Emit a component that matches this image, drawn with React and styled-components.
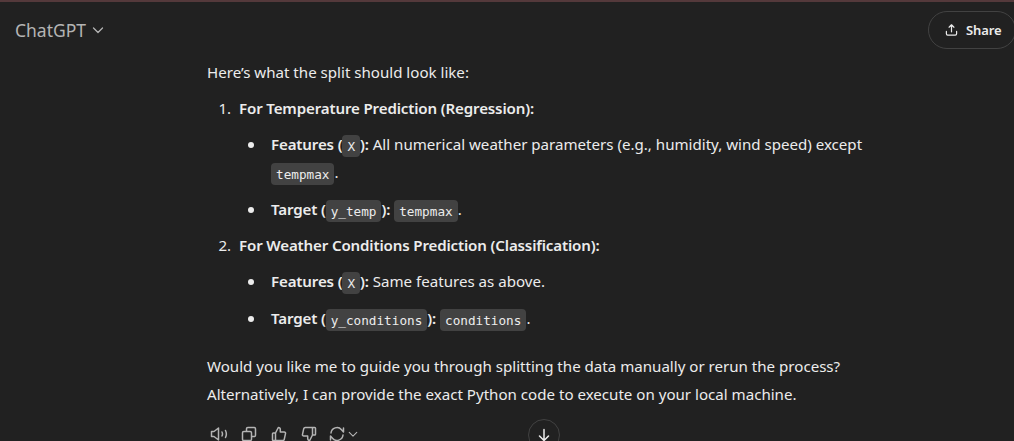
import styled, { createGlobalStyle } from "styled-components";

const GlobalStyle = createGlobalStyle`
  html, body {
    margin: 0;
    height: 100%;
    overflow: hidden;
    background: #212121;
  }
`;

const Page = styled.div`
  position: relative;
  height: 441px;
  overflow: hidden;
  background: #212121;
  color: #ececec;
  font-family: "Noto Sans", "Open Sans", sans-serif;
  font-size: 15.1px;
  line-height: 28px;
`;

const TopStrip = styled.div`
  height: 2px;
  background: #54393b;
`;

const Header = styled.header`
  display: flex;
  align-items: center;
  justify-content: space-between;
  height: 56px;
  padding-left: 15px;
`;

const ModelButton = styled.div`
  display: flex;
  align-items: center;
  gap: 6px;
  font-size: 17.5px;
  color: #b4b4b4;
`;

const ShareButton = styled.div`
  display: flex;
  align-items: center;
  gap: 8px;
  box-sizing: border-box;
  width: 88px;
  height: 38px;
  margin-right: -2px;
  padding-left: 16px;
  border: 1px solid #424242;
  border-radius: 19px;
  font-size: 13px;
  font-weight: 600;
  letter-spacing: -0.1px;
  color: #ececec;
`;

const Article = styled.main`
  width: 660px;
  margin-left: 207px;

  strong {
    font-weight: 600;
    letter-spacing: -0.15px;
  }
`;

const Para = styled.p`
  margin: 0;
`;

const Closing = styled(Para)`
  margin-top: 20px;
`;

const Numbered = styled.ol`
  margin: 8px 0 0;
  padding: 0 0 0 32px;

  > li {
    margin-top: 8px;
  }
  > li:first-child {
    margin-top: 0;
  }
  > li::marker {
    content: counter(list-item) ".\\00a0\\00a0";
  }
`;

const Bullets = styled.ul`
  margin: 8px 0 0;
  padding: 0 0 0 32px;
  list-style: none;

  > li {
    position: relative;
    margin-top: 9px;
  }
  > li:first-child {
    margin-top: 0;
  }
  > li::before {
    content: "";
    position: absolute;
    left: -23px;
    top: 12px;
    width: 6px;
    height: 6px;
    border-radius: 50%;
    background: #ececec;
  }
`;

const Code = styled.code`
  padding: 3.5px 5px;
  border-radius: 4px;
  background: #424242;
  color: #ececec;
  font-family: "DejaVu Sans Mono", "Liberation Mono", monospace;
  font-size: 12.7px;
  font-weight: 400;
  letter-spacing: 0;
  line-height: 1;
`;

const Actions = styled.div`
  display: flex;
  align-items: center;
  gap: 12px;
  margin: 17px 0 0 3px;
  color: #b4b4b4;
`;

const ActionIcon = styled.svg`
  width: 18px;
  height: 18px;
  flex: none;
  fill: none;
  stroke: currentColor;
  stroke-width: 1.5;
  stroke-linecap: round;
  stroke-linejoin: round;
`;

const RegenGroup = styled.div`
  display: flex;
  align-items: center;
  gap: 2px;
  margin-left: -2px;
`;

const ScrollButton = styled.div`
  position: absolute;
  left: 528px;
  top: 419px;
  width: 30px;
  height: 30px;
  display: flex;
  align-items: center;
  justify-content: center;
  border: 1px solid #424242;
  border-radius: 50%;
  background: #212121;
  color: #ececec;
`;

const Chevron = ({ size = 12 }) => (
  <svg width={size} height={size} viewBox="0 0 12 12" fill="none" stroke="currentColor" strokeWidth="1.3" strokeLinecap="round" strokeLinejoin="round">
    <path d="M1.5 4l4.5 4.5L10.5 4" />
  </svg>
);

const ShareIcon = () => (
  <svg width="13" height="14" viewBox="0 0 14 14" fill="none" stroke="currentColor" strokeWidth="1.3" strokeLinecap="round" strokeLinejoin="round">
    <path d="M7 9V1.6M4.4 4L7 1.4 9.6 4M1.5 8.5v2.6c0 .8.6 1.4 1.4 1.4h8.2c.8 0 1.4-.6 1.4-1.4V8.5" />
  </svg>
);

export default function App() {
  return (
    <Page>
      <GlobalStyle />
      <TopStrip />
      <Header>
        <ModelButton>
          ChatGPT
          <Chevron />
        </ModelButton>
        <ShareButton>
          <ShareIcon />
          Share
        </ShareButton>
      </Header>
      <Article>
        <Para>Here’s what the split should look like:</Para>
        <Numbered>
          <li>
            <strong>For Temperature Prediction (Regression):</strong>
            <Bullets>
              <li>
                <strong>Features (<Code>X</Code>):</strong> All numerical weather parameters (e.g., humidity, wind speed) except <Code>tempmax</Code>.
              </li>
              <li>
                <strong>Target (<Code>y_temp</Code>):</strong> <Code>tempmax</Code>.
              </li>
            </Bullets>
          </li>
          <li>
            <strong>For Weather Conditions Prediction (Classification):</strong>
            <Bullets>
              <li>
                <strong>Features (<Code>X</Code>):</strong> Same features as above.
              </li>
              <li>
                <strong>Target (<Code>y_conditions</Code>):</strong> <Code>conditions</Code>.
              </li>
            </Bullets>
          </li>
        </Numbered>
        <Closing>
          Would you like me to guide you through splitting the data manually or rerun the process? Alternatively, I can provide the exact Python code to execute on your local machine.
        </Closing>
        <Actions>
          <ActionIcon viewBox="0 0 18 18">
            <path d="M1.5 6.5H4L8.500 3v12L4 11.500H1.500zM12 7c.6 1.200.6 2.800 0 4M15.500 5.500c1.100 2.200 1.100 4.800 0 7" />
          </ActionIcon>
          <ActionIcon viewBox="0 0 18 18">
            <path d="M6.500 6V3.800c0-.7.600-1.300 1.300-1.300h6.400c.7 0 1.300.6 1.300 1.300v6.400c0 .7-.6 1.300-1.300 1.300H12M3.800 6.500h6.400c.7 0 1.300.6 1.300 1.300v6.400c0 .7-.6 1.300-1.300 1.300H3.800c-.7 0-1.300-.6-1.300-1.300V7.800c0-.7.600-1.300 1.300-1.300z" />
          </ActionIcon>
          <ActionIcon viewBox="0 0 18 18">
            <path d="M5.500 8l2.800-5.500c1.200 0 2 .9 2 2V7h3.900c.9 0 1.500.8 1.300 1.700l-1.200 5.500c-.2.800-.8 1.300-1.600 1.300H5.500zM5.500 8H3.300c-.5 0-.8.400-.8.800v5.900c0 .5.400.8.800.8h2.200" />
          </ActionIcon>
          <ActionIcon viewBox="0 0 18 18">
            <path d="M12.500 10l-2.800 5.500c-1.200 0-2-.9-2-2V11H3.800c-.9 0-1.500-.8-1.300-1.700l1.200-5.500c.2-.8.8-1.300 1.600-1.300h7.200zM12.500 10h2.200c.5 0 .8-.4.800-.8V3.300c0-.5-.4-.8-.8-.8h-2.200" />
          </ActionIcon>
          <RegenGroup>
            <ActionIcon viewBox="0 0 18 18">
              <path d="M3 8a6 6 0 0 1 10.500-3.300L15.500 7V3M15 10a6 6 0 0 1-10.500 3.300L2.500 11v4" />
            </ActionIcon>
            <Chevron size={10} />
          </RegenGroup>
        </Actions>
      </Article>
      <ScrollButton>
        <svg width="16" height="16" viewBox="0 0 16 16" fill="none" stroke="currentColor" strokeWidth="1.5" strokeLinecap="round" strokeLinejoin="round">
          <path d="M8 2.500v11M3.500 9L8 13.500 12.500 9" />
        </svg>
      </ScrollButton>
    </Page>
  );
}
